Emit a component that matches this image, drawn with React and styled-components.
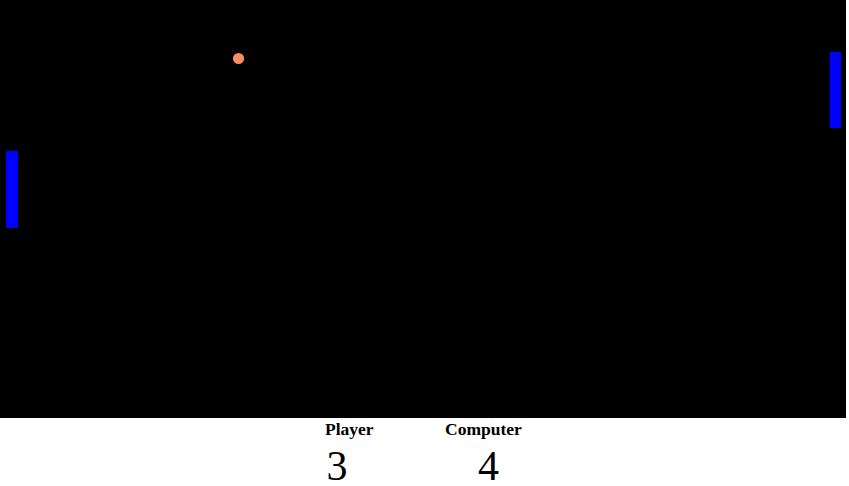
import React from "react";
import styled, { createGlobalStyle } from "styled-components";

const Global = createGlobalStyle`
  html, body { margin: 0; padding: 0; overflow: hidden; background: #fff; }
  body { font-family: "Liberation Serif", "Times New Roman", serif; }
`;

const Page = styled.div`
  width: 846px;
  display: flex;
  flex-direction: column;
`;

const Board = styled.svg`
  display: block;
  width: 846px;
  height: 418px;
  background: #000;
`;

const Scores = styled.div`
  display: grid;
  grid-template-columns: 49px 76px;
  column-gap: 71px;
  justify-content: center;
  padding-top: 1px;
`;

const ScoreBox = styled.div`
  display: flex;
  flex-direction: column;
  align-items: flex-start;
`;

const Label = styled.div`
  font-weight: bold;
  font-size: 17.5px;
  line-height: 20px;
  white-space: nowrap;
  color: #000;
`;

const Value = styled.div`
  font-size: 42px;
  line-height: 40px;
  margin-top: 7px;
  margin-left: ${(p) => p.$offset}px;
  color: #000;
`;

const players = [
  { label: "Player", score: 3, offset: 1.5 },
  { label: "Computer", score: 4, offset: 33 },
];

export default function App() {
  return (
    <>
      <Global />
      <Page>
        <Board viewBox="0 0 846 418">
          <rect x="6" y="151" width="12" height="77" fill="#0000ff" />
          <rect x="829.7" y="52" width="11.3" height="76" fill="#0000ff" />
          <circle cx="238.5" cy="58.5" r="5.6" fill="#fa8c62" />
        </Board>
        <Scores>
          {players.map((p) => (
            <ScoreBox key={p.label}>
              <Label>{p.label}</Label>
              <Value $offset={p.offset}>{p.score}</Value>
            </ScoreBox>
          ))}
        </Scores>
      </Page>
    </>
  );
}
